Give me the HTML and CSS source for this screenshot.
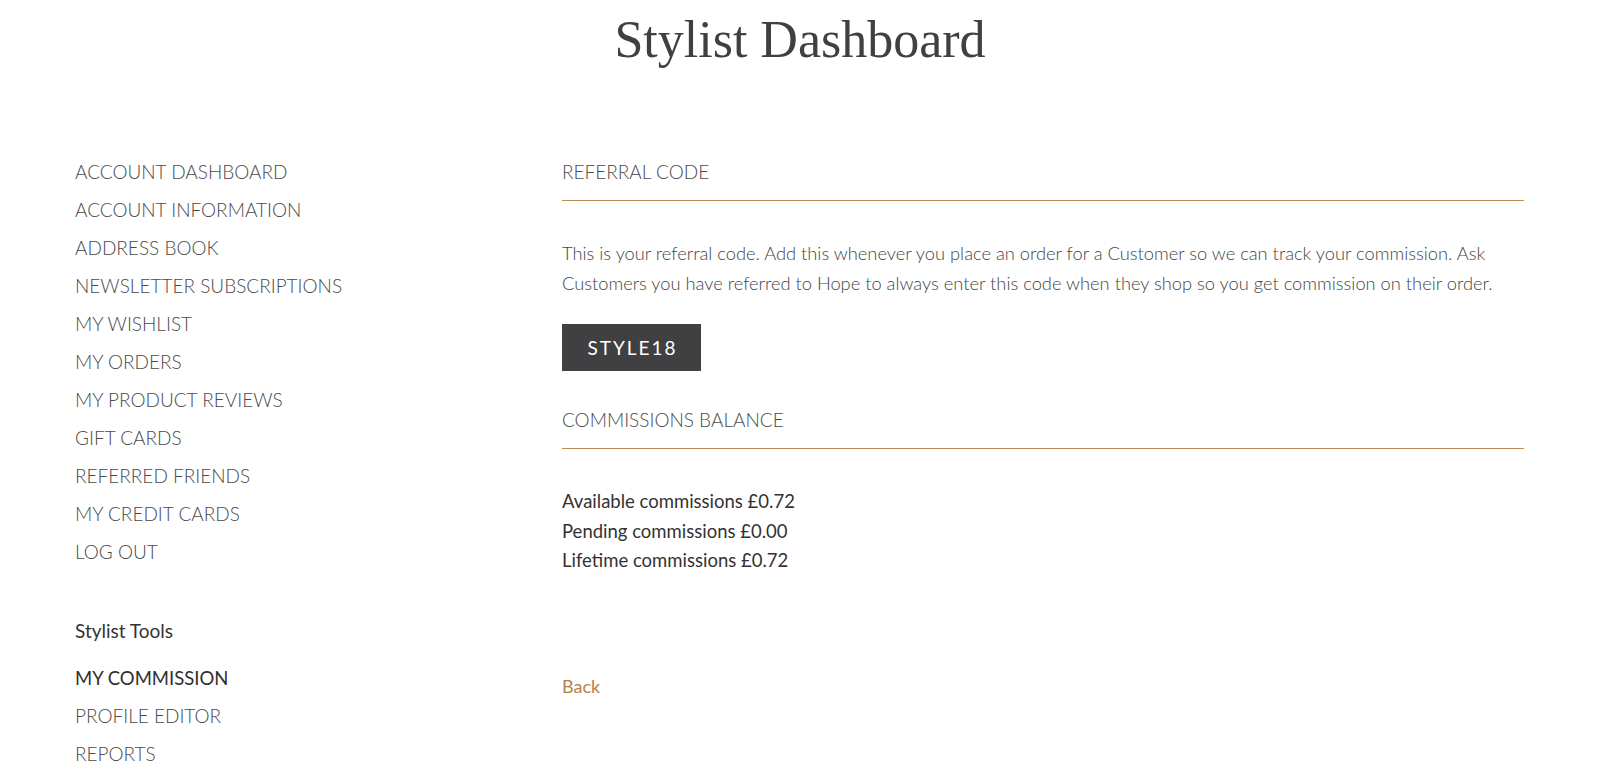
FILE: index.html
```html
<!DOCTYPE html>
<html lang="en">
<head>
<meta charset="utf-8">
<title>Stylist Dashboard</title>
<link rel="stylesheet" href="styles.css">
</head>
<body>
<h1 class="page-title">Stylist Dashboard</h1>
<div class="layout">
  <aside class="sidebar">
    <ul class="nav">
      <li><a href="#">ACCOUNT DASHBOARD</a></li>
      <li><a href="#">ACCOUNT INFORMATION</a></li>
      <li><a href="#">ADDRESS BOOK</a></li>
      <li><a href="#">NEWSLETTER SUBSCRIPTIONS</a></li>
      <li><a href="#">MY WISHLIST</a></li>
      <li><a href="#">MY ORDERS</a></li>
      <li><a href="#">MY PRODUCT REVIEWS</a></li>
      <li><a href="#">GIFT CARDS</a></li>
      <li><a href="#">REFERRED FRIENDS</a></li>
      <li><a href="#">MY CREDIT CARDS</a></li>
      <li><a href="#">LOG OUT</a></li>
    </ul>
    <div class="tools-title">Stylist Tools</div>
    <ul class="nav tools">
      <li><a href="#" class="current">MY COMMISSION</a></li>
      <li><a href="#">PROFILE EDITOR</a></li>
      <li><a href="#">REPORTS</a></li>
    </ul>
  </aside>
  <main class="content">
    <h2 class="section-title">REFERRAL CODE</h2>
    <p class="intro">This is your referral code. Add this whenever you place an order for a Customer so we can track your commission. Ask Customers you have referred to Hope to always enter this code when they shop so you get commission on their order.</p>
    <div class="code">STYLE18</div>
    <h2 class="section-title balance-title">COMMISSIONS BALANCE</h2>
    <ul class="balance">
      <li>Available commissions £0.72</li>
      <li>Pending commissions £0.00</li>
      <li>Lifetime commissions £0.72</li>
    </ul>
    <a href="#" class="back">Back</a>
  </main>
</div>
</body>
</html>
```

FILE: styles.css
```css
html, body {
  margin: 0;
  padding: 0;
  background: #fff;
}
body {
  font-family: Lato, "Liberation Sans", sans-serif;
  color: #4a4a4a;
}
.page-title {
  margin: 0;
  padding-top: 14px;
  font-family: "Liberation Serif", serif;
  font-weight: 400;
  font-size: 52px;
  line-height: 52px;
  color: #404040;
  text-align: center;
}
.layout {
  display: flex;
  padding: 87px 76px 0 75px;
}
.sidebar {
  width: 487px;
  flex: none;
}
.nav {
  list-style: none;
  margin: 0;
  padding: 0;
}
.nav li {
  line-height: 38px;
  font-size: 19px;
  font-weight: 300;
}
.nav a {
  color: #4a4a4a;
  text-decoration: none;
}
.nav a.current {
  color: #2e2e2e;
  font-size: 18.5px;
  font-weight: 400;
}
.tools-title {
  margin-top: 45px;
  line-height: 30px;
  font-size: 19px;
  color: #333;
  font-weight: 400;
}
.tools {
  margin-top: 13px;
}
.content {
  flex: 1;
  min-width: 0;
}
.section-title {
  margin: 0;
  font-size: 19px;
  font-weight: 300;
  line-height: 38px;
  color: #4a4a4a;
  padding-bottom: 9px;
  border-bottom: 1px solid #b98a55;
}
.intro {
  margin: 37px 0 0;
  font-size: 18.3px;
  font-weight: 300;
  line-height: 30px;
  color: #444;
}
.code {
  margin-top: 26px;
  display: flex;
  align-items: center;
  justify-content: center;
  width: 139px;
  height: 47px;
  background: #404042;
  color: #fff;
  font-size: 19px;
  font-weight: 400;
  letter-spacing: 2px;
  text-indent: 2px;
}
.balance-title {
  margin-top: 30px;
}
.balance {
  list-style: none;
  margin: 38px 0 0;
  padding: 0;
}
.balance li {
  font-size: 18.5px;
  line-height: 29.5px;
  color: #333;
}
.back {
  display: inline-block;
  margin-top: 95px;
  font-size: 18px;
  line-height: 30px;
  color: #b5824a;
  text-decoration: none;
}
```
